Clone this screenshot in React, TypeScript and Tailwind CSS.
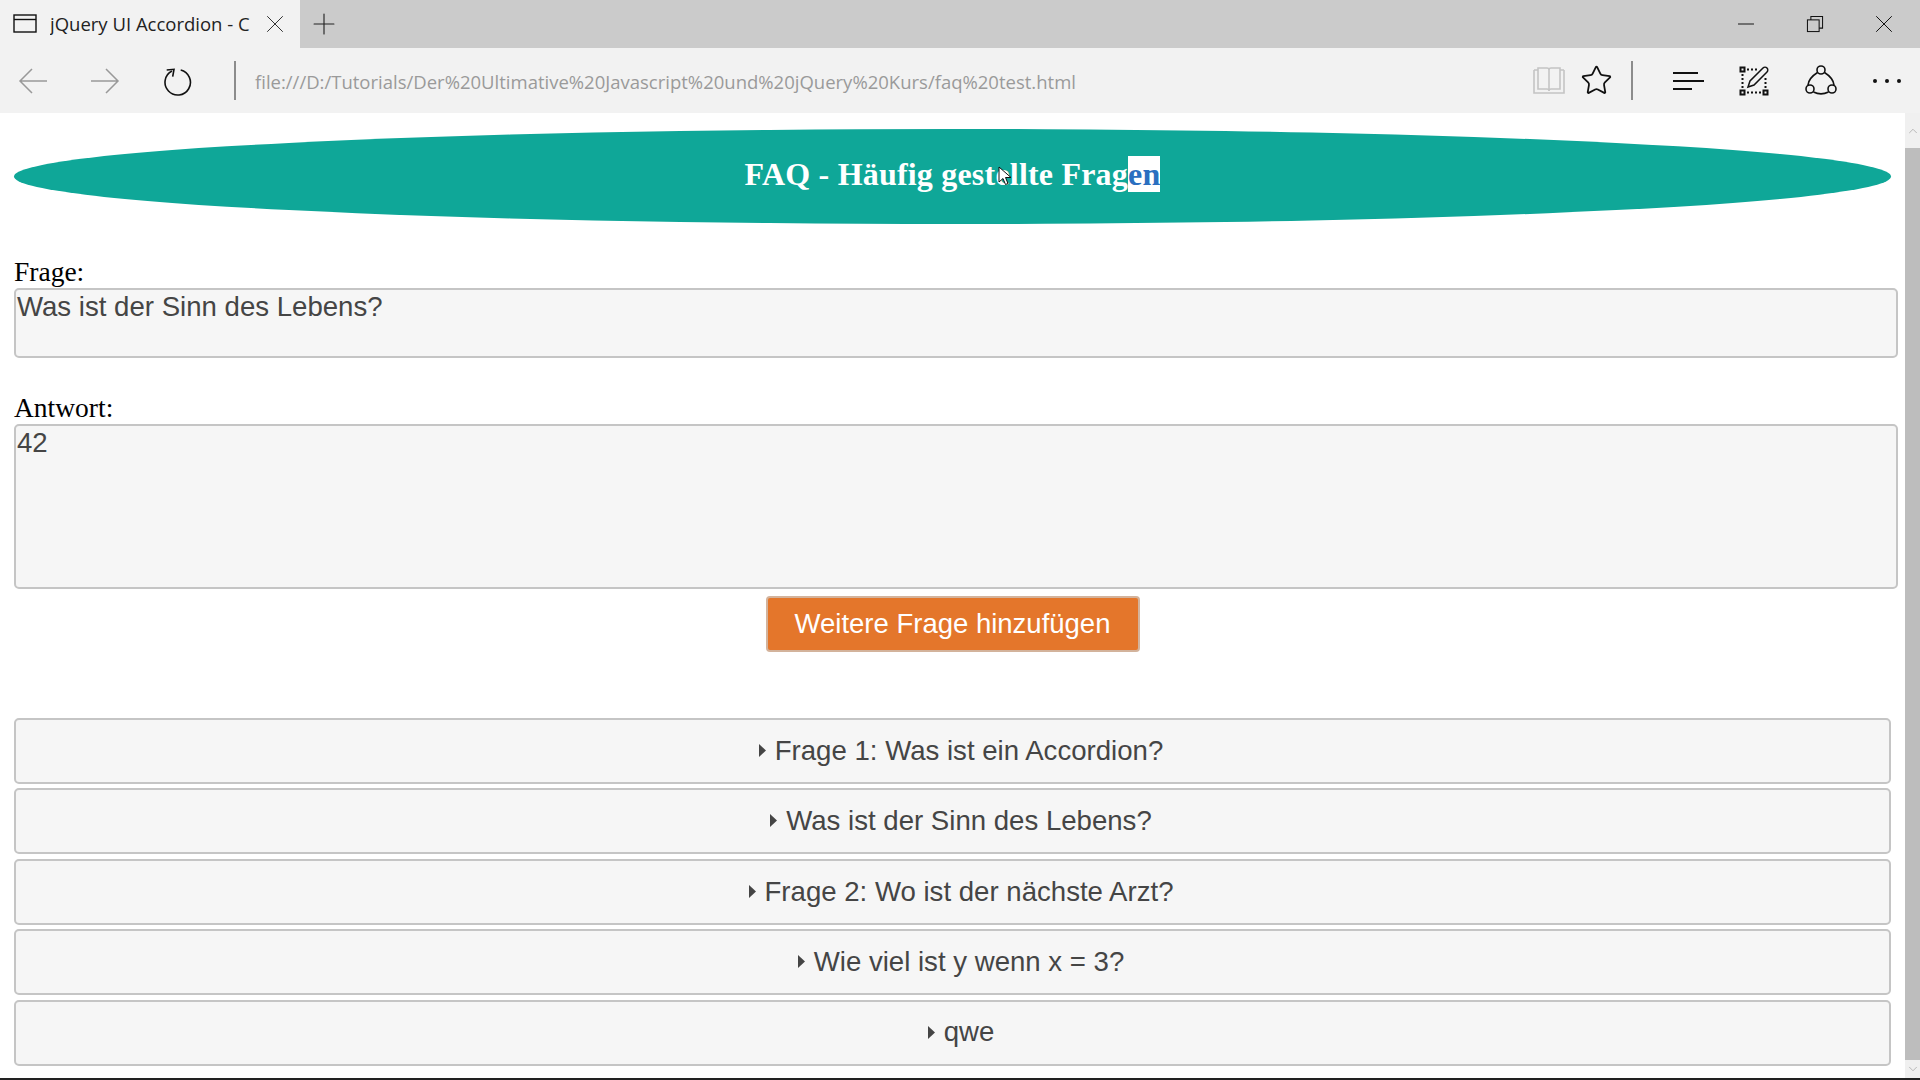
import React from 'react';
import { Star, X, Plus, Minus, ChevronUp, ChevronDown } from 'lucide-react';

const questions = [
  'Frage 1: Was ist ein Accordion?',
  'Was ist der Sinn des Lebens?',
  'Frage 2: Wo ist der nächste Arzt?',
  'Wie viel ist y wenn x = 3?',
  'qwe',
];

const sans = "font-['Liberation_Sans',Arial,sans-serif]";
const serif = "font-['Liberation_Serif','Times_New_Roman',serif]";

function TitleBar() {
  return (
    <div className="flex h-[48px] items-stretch bg-[#cbcbcb]">
      <div className="flex w-[300px] items-center bg-[#f2f2f2] pl-[13px] pr-[10px]">
        <svg width="25" height="20" viewBox="0 0 25 20" fill="none" stroke="#111" strokeWidth="1.4">
          <rect x="1" y="1" width="22" height="17" />
          <path d="M1 5.5h22" />
        </svg>
        <span className="ml-[12px] w-[202px] overflow-hidden whitespace-nowrap text-[18.5px] text-[#222] font-['Open_Sans',sans-serif]">
          jQuery UI Accordion - C
        </span>
        <X className="ml-auto text-[#333]" size={30} strokeWidth={0.8} />
      </div>
      <div className="flex w-[48px] items-center justify-center">
        <Plus className="text-[#222]" size={34} strokeWidth={0.8} />
      </div>
      <div className="ml-auto flex items-center pr-[2px]">
        <div className="flex w-[69px] justify-center">
          <Minus className="text-[#111]" size={26} strokeWidth={0.9} />
        </div>
        <div className="flex w-[69px] justify-center">
          <svg width="22" height="22" viewBox="0 0 16 16" fill="none" stroke="#111" strokeWidth="0.75">
            <rect x="2.500" y="5" width="8.500" height="8.500" />
            <path d="M5 5V2.500h8.500V11H11" />
          </svg>
        </div>
        <div className="flex w-[69px] justify-center">
          <X className="text-[#111]" size={30} strokeWidth={0.8} />
        </div>
      </div>
    </div>
  );
}

function ToolBar() {
  return (
    <div className="flex h-[65px] items-center bg-[#f2f2f2]">
      <svg className="ml-[18px]" width="30" height="26" viewBox="0 0 30 26" fill="none" stroke="#999" strokeWidth="1.5">
        <path d="M29 13H2M14 1L2 13l12 12" />
      </svg>
      <svg className="ml-[42px]" width="30" height="26" viewBox="0 0 30 26" fill="none" stroke="#999" strokeWidth="1.5">
        <path d="M1 13h27M16 1l12 12-12 12" />
      </svg>
      <svg className="ml-[42px]" width="30" height="30" viewBox="0 0 30 30" fill="none" stroke="#111" strokeWidth="1.600">
        <path d="M18.700 4A12.700 12.700 0 1 1 10 5" />
        <path d="M4.700 4L12 3.300l-1.300 7.400" />
      </svg>
      <div className="ml-[42px] h-[39px] w-[2px] bg-[#8c8c8c]" />
      <span className="relative top-[1px] ml-[19px] text-[18.5px] text-[#9a9a9a] font-['Open_Sans',sans-serif]">
        file:///D:/Tutorials/Der%20Ultimative%20Javascript%20und%20jQuery%20Kurs/faq%20test.html
      </span>
      <div className="ml-auto flex items-center">
        <svg width="32" height="29" viewBox="0 0 32 29" fill="none" stroke="#c4c4c4" strokeWidth="1.6">
          <path d="M1 4h4M27 4h4M1 4v23h30V4" />
          <path d="M5 2h9c1 0 2 1 2 2v21c0-1-1-2-2-2H5zM27 2h-9c-1 0-2 1-2 2v21c0-1 1-2 2-2h9z" />
        </svg>
        <Star className="ml-[15px] text-[#111]" size={33} strokeWidth={1.3} />
        <div className="ml-[18px] h-[39px] w-[2px] bg-[#8c8c8c]" />
        <svg className="ml-[40px]" width="31" height="20" viewBox="0 0 31 20" fill="none" stroke="#111" strokeWidth="2">
          <path d="M0 2h25M0 10h31M0 18h19" />
        </svg>
        <svg className="ml-[35px]" width="30" height="30" viewBox="0 0 30 30" fill="none" stroke="#111">
          <rect x="1.500" y="1.500" width="4" height="4" strokeWidth="2" />
          <rect x="1.500" y="24.500" width="4" height="4" strokeWidth="2" />
          <rect x="24.500" y="24.500" width="4" height="4" strokeWidth="2" />
          <path d="M8 3.500h10M3.500 8v15M8 26.500h15M26.500 12v10" strokeWidth="2" strokeDasharray="2 2" />
          <path d="M9 21l2-6L24 2c1-1 3-1 4 0s1 3 0 4L15 19z" strokeWidth="1.500" />
        </svg>
        <svg className="ml-[36px]" width="32" height="32" viewBox="0 0 32 32" fill="none" stroke="#111" strokeWidth="1.600">
          <circle cx="16" cy="5" r="4" />
          <circle cx="5" cy="24" r="4" />
          <circle cx="27" cy="24" r="4" />
          <path d="M12.500 7.500C7 11 3.500 15 3 20M19.500 7.500C25 11 28.500 15 29 20M8.500 27c5 2.500 10 2.500 15 0" />
        </svg>
        <div className="ml-[36px] mr-[19px] flex gap-[8px]">
          <span className="size-[4px] rounded-full bg-[#111]" />
          <span className="size-[4px] rounded-full bg-[#111]" />
          <span className="size-[4px] rounded-full bg-[#111]" />
        </div>
      </div>
    </div>
  );
}

function Field({ label, value, height }: { label: string; value: string; height: string }) {
  return (
    <div className="pr-[7px]">
      <div className={`${serif} pb-[2px] text-[27.5px] leading-[28px] text-black`}>{label}</div>
      <div className={`${height} ${sans} rounded-[5px] border-2 border-[#c5c5c5] bg-[#f6f6f6] pl-[1px] text-[27.6px] leading-[33px] text-[#454545]`}>
        {value}
      </div>
    </div>
  );
}

export default function App() {
  return (
    <div className="flex h-[1080px] w-[1920px] flex-col overflow-hidden bg-white">
      <TitleBar />
      <ToolBar />
      <div className="flex min-h-0 flex-1">
        <main className="w-[1905px] pl-[14px]">
          <div className="pr-[14px] pt-[16px]">
            <div className="relative flex h-[95px] items-center justify-center rounded-[50%] bg-[#0fa798]">
              <h1 className={`${serif} relative top-[-3px] text-[32px] font-bold tracking-[0.2px] text-white`}>
                FAQ - Häufig gestellte Frag
                <span className="bg-white text-[#2a6fc0]">en</span>
              </h1>
              <svg className="absolute left-[984px] top-[37px]" width="14" height="20" viewBox="0 0 14 20">
                <path d="M1 1v15l4-3.500 2.500 6 2.500-1-2.500-6H13z" fill="#fff" stroke="#111" strokeWidth="1" />
              </svg>
            </div>
          </div>

          <div className="mt-[34px]">
            <Field label="Frage:" value="Was ist der Sinn des Lebens?" height="h-[70px]" />
          </div>
          <div className="mt-[36px]">
            <Field label="Antwort:" value="42" height="h-[165px]" />
          </div>

          <div className="mt-[7px] flex justify-center pr-[14px]">
            <button className={`${sans} h-[56px] w-[374px] rounded-[4px] border-2 border-[#d3b39c] bg-[#e4762b] text-[27.5px] text-white`}>
              Weitere Frage hinzufügen
            </button>
          </div>

          <div className="mt-[66px] flex flex-col gap-[4.4px] pr-[14px]">
            {questions.map((q) => (
              <div
                key={q}
                className={`${sans} flex h-[66px] items-center justify-center rounded-[5px] border-2 border-[#c5c5c5] bg-[#f6f6f6] pb-[1px] pl-[16px] text-[27.6px] text-[#454545]`}
              >
                <svg className="mr-[8px]" width="9" height="15" viewBox="0 0 9 15">
                  <path d="M1 1l7 6.500-7 6.500z" fill="#454545" />
                </svg>
                {q}
              </div>
            ))}
          </div>
        </main>

        <div className="flex w-[15px] flex-col bg-[#f0f0f0]">
          <div className="flex h-[35px] items-center justify-center">
            <ChevronUp className="text-[#a0a0a0]" size={14} strokeWidth={1.2} />
          </div>
          <div className="w-full flex-1 bg-[#bdbdbd]" />
          <div className="flex h-[18px] items-center justify-center">
            <ChevronDown className="text-[#a0a0a0]" size={14} strokeWidth={1.2} />
          </div>
        </div>
      </div>
      <div className="h-[2px] bg-[#222]" />
    </div>
  );
}
